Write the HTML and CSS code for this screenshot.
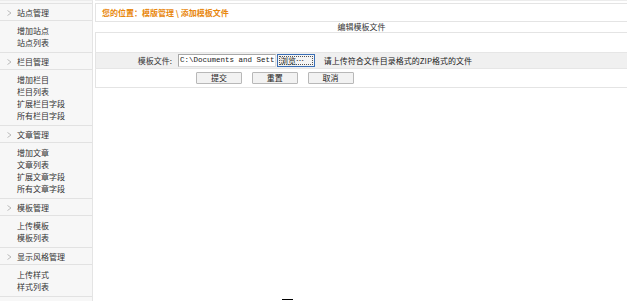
FILE: index.html
```html
<!DOCTYPE html>
<html lang="zh-CN">
<head>
    <meta charset="UTF-8">
    <title>添加模板文件</title>
    <link rel="stylesheet" href="styles.css">
</head>
<body>
    <div class="sidebar">
        <div class="menu-head"><svg class="arrow" width="5" height="6" viewBox="0 0 5 6"><polyline points="0.5,0.5 4,3 0.5,5.5" fill="none" stroke="#bbb" stroke-width="1"/></svg>站点管理</div>
        <ul class="menu-list">
            <li>增加站点</li>
            <li>站点列表</li>
        </ul>
        <div class="menu-head"><svg class="arrow" width="5" height="6" viewBox="0 0 5 6"><polyline points="0.5,0.5 4,3 0.5,5.5" fill="none" stroke="#bbb" stroke-width="1"/></svg>栏目管理</div>
        <ul class="menu-list">
            <li>增加栏目</li>
            <li>栏目列表</li>
            <li>扩展栏目字段</li>
            <li>所有栏目字段</li>
        </ul>
        <div class="menu-head"><svg class="arrow" width="5" height="6" viewBox="0 0 5 6"><polyline points="0.5,0.5 4,3 0.5,5.5" fill="none" stroke="#bbb" stroke-width="1"/></svg>文章管理</div>
        <ul class="menu-list">
            <li>增加文章</li>
            <li>文章列表</li>
            <li>扩展文章字段</li>
            <li>所有文章字段</li>
        </ul>
        <div class="menu-head"><svg class="arrow" width="5" height="6" viewBox="0 0 5 6"><polyline points="0.5,0.5 4,3 0.5,5.5" fill="none" stroke="#bbb" stroke-width="1"/></svg>模板管理</div>
        <ul class="menu-list">
            <li>上传模板</li>
            <li>模板列表</li>
        </ul>
        <div class="menu-head"><svg class="arrow" width="5" height="6" viewBox="0 0 5 6"><polyline points="0.5,0.5 4,3 0.5,5.5" fill="none" stroke="#bbb" stroke-width="1"/></svg>显示风格管理</div>
        <ul class="menu-list">
            <li>上传样式</li>
            <li>样式列表</li>
        </ul>
    </div>

    <div class="main">
        <div class="location">您的位置：模版管理 \ 添加模板文件</div>
        <div class="form-title">编辑模板文件</div>
        <table class="form-table">
            <tr class="blank-row"><td colspan="2"></td></tr>
            <tr class="field-row">
                <td class="label">模板文件:</td>
                <td class="field">
                    <span class="file-input">C:\Documents and Sett</span><span class="browse">浏览…</span>
                    <span class="hint">请上传符合文件目录格式的ZIP格式的文件</span>
                </td>
            </tr>
            <tr class="button-row">
                <td></td>
                <td class="buttons">
                    <button>提交</button>
                    <button>重置</button>
                    <button>取消</button>
                </td>
            </tr>
        </table>
    </div>

    <div class="cursor-mark"></div>
</body>
</html>
```

FILE: styles.css
```css
body {
    margin: 0;
    font-family: "Noto Sans CJK SC", "Liberation Sans", sans-serif;
    font-size: 8px;
    color: #333;
    background: white;
    display: flex;
    min-height: 301px;
    overflow: hidden;
}

.sidebar {
    width: 92px;
    flex: none;
    background: #f7f7f7;
    border-right: 1px solid #e4e4e4;
    padding-top: 3px;
    border-top: 1px solid #ececec;
}

.menu-head {
    height: 18px;
    line-height: 18px;
    padding-left: 17px;
    position: relative;
    border-top: 1px solid #e2e2e2;
    border-bottom: 1px solid #e2e2e2;
    margin-top: -1px;
    box-sizing: border-box;
}

.menu-head .arrow {
    position: absolute;
    left: 7px;
    top: 6px;
}

.menu-list {
    list-style: none;
    margin: 0;
    padding: 4px 0 3px 17px;
    border-bottom: 1px solid #e2e2e2;
}

.menu-list li {
    height: 12px;
    line-height: 12px;
}

.main {
    flex: 1;
    margin-left: 2px;
    padding-top: 2px;
    border-top: 1px solid #ececec;
}

.location {
    height: 17px;
    line-height: 17px;
    padding-left: 6px;
    border: 1px solid #e4e4e4;
    border-right: none;
    color: #e8870c;
    font-weight: bold;
}

.form-title {
    height: 10px;
    line-height: 10px;
    text-align: center;
    margin-left: 1px;
}

.form-table {
    width: 100%;
    border-collapse: collapse;
    border: 1px solid #e4e4e4;
    border-right: none;
}

.form-table td {
    padding: 0;
}

.blank-row td {
    height: 19px;
}

.field-row td {
    height: 15px;
    background: #f0f0f0;
    border-top: 1px solid #e6e6e6;
    border-bottom: 1px solid #e6e6e6;
}

.label {
    width: 76px;
    text-align: right;
    padding-right: 6px !important;
}

.field {
    white-space: nowrap;
}

.file-input {
    display: inline-block;
    vertical-align: middle;
    width: 94px;
    height: 11px;
    line-height: 11px;
    padding: 0 1px;
    border: 1px solid #a8a8a8;
    border-right-color: #dcdcdc;
    border-bottom-color: #dcdcdc;
    background: white;
    font-family: "Liberation Mono", monospace;
    font-size: 7.5px;
    color: #222;
    overflow: hidden;
}

.browse {
    display: inline-block;
    vertical-align: middle;
    width: 34px;
    height: 11px;
    line-height: 11px;
    margin-left: 1px;
    padding-left: 2px;
    border: 1px solid #3b6fb6;
    outline: 1px dotted #555;
    outline-offset: -3px;
    background: #f4f4f4;
    color: #222;
}

.hint {
    margin-left: 7px;
    vertical-align: middle;
    color: #222;
}

.button-row td {
    height: 18px;
}

.buttons {
    padding-left: 18px !important;
}

button {
    width: 46px;
    height: 12px;
    padding: 0;
    margin-right: 8px;
    font-family: "Noto Sans CJK SC", sans-serif;
    font-size: 8px;
    line-height: 10px;
    color: #222;
    background: #f2f2f2;
    border: 1px solid #b8b8b8;
    border-radius: 1px;
    vertical-align: middle;
}

.cursor-mark {
    position: absolute;
    left: 282px;
    top: 299px;
    width: 11px;
    height: 1px;
    background: black;
}
```
